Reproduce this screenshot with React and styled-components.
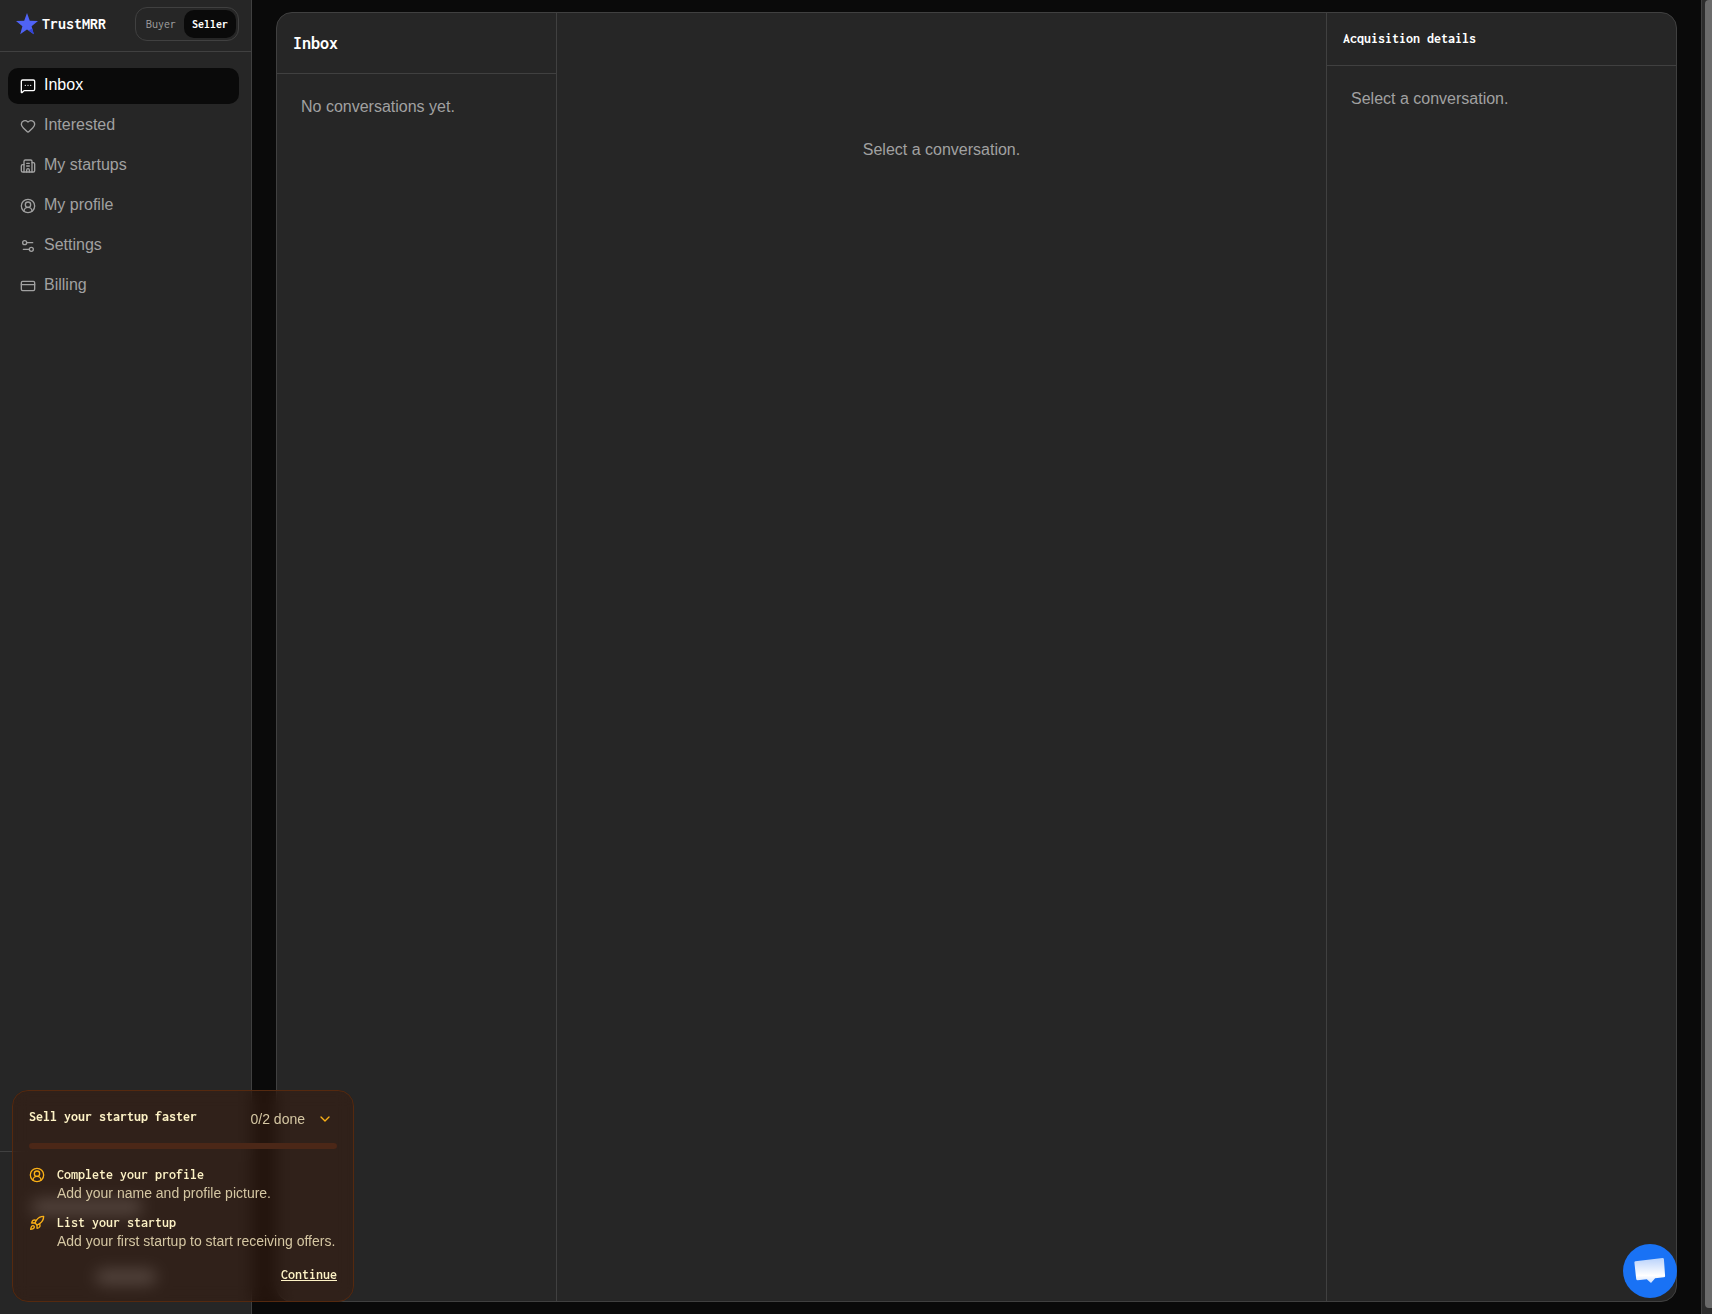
import React, { useState } from "react";
import styled, { createGlobalStyle } from "styled-components";
import {
  MessageSquareMore,
  Heart,
  Building2,
  CircleUserRound,
  Settings2,
  CreditCard,
  ChevronDown,
  Rocket,
} from "lucide-react";

const links = [
  { label: "Inbox", icon: MessageSquareMore, active: true },
  { label: "Interested", icon: Heart },
  { label: "My startups", icon: Building2 },
  { label: "My profile", icon: CircleUserRound },
  { label: "Settings", icon: Settings2 },
  { label: "Billing", icon: CreditCard },
];

const steps = [
  {
    title: "Complete your profile",
    text: "Add your name and profile picture.",
    icon: CircleUserRound,
  },
  {
    title: "List your startup",
    text: "Add your first startup to start receiving offers.",
    icon: Rocket,
  },
];

const Sidebar = () => {
  const [role, setRole] = useState("Seller");
  return (
    <Aside>
      <Aside__top>
        <Logo href="#">
          <svg width="22" height="22" viewBox="0 0 22 22" aria-hidden="true">
            <path
              fill="#4f63f5"
              d="M11 0l2.800 7.800 8.200.2-6.400 5.200 2.200 8L11 16.600l-6.800 4.600 2.200-8L0 8l8.200-.2z"
            />
            <path fill="#3344d8" d="M12.500 17.600l3.800-2.200 1.500 5.800z" />
          </svg>
          TrustMRR
        </Logo>
        <Toggle>
          {["Buyer", "Seller"].map((name) => (
            <Toggle__button
              key={name}
              type="button"
              $on={role === name}
              onClick={() => setRole(name)}
            >
              {name}
            </Toggle__button>
          ))}
        </Toggle>
      </Aside__top>
      <Nav>
        {links.map(({ label, icon: Icon, active }) => (
          <Nav__link key={label} href="#" $active={active}>
            <Icon size={16} />
            <Nav__label>{label}</Nav__label>
          </Nav__link>
        ))}
      </Nav>
      <Aside__footer aria-hidden="true">
        <Skeleton $width="110px" />
        <Skeleton $width="60px" $center />
      </Aside__footer>
    </Aside>
  );
};

const Checklist = () => (
  <Card>
    <Card__head>
      <Card__title>Sell your startup faster</Card__title>
      <Card__toggle type="button">
        0/2 done
        <ChevronDown size={16} />
      </Card__toggle>
    </Card__head>
    <Card__bar
      role="progressbar"
      aria-label="Steps done"
      aria-valuenow={0}
      aria-valuemax={2}
    />
    <Steps>
      {steps.map(({ title, text, icon: Icon }) => (
        <Step key={title}>
          <Icon size={16} />
          <div>
            <Step__title>{title}</Step__title>
            <Step__text>{text}</Step__text>
          </div>
        </Step>
      ))}
    </Steps>
    <Card__link href="#">Continue</Card__link>
  </Card>
);

const App = () => {
  return (
    <Page>
      <GlobalStyle />
      <Sidebar />
      <Main>
        <Panel>
          <Column>
            <Column__head $large>
              <h1>Inbox</h1>
            </Column__head>
            <Empty>No conversations yet.</Empty>
          </Column>
          <Column>
            <Empty $center>Select a conversation.</Empty>
          </Column>
          <Column>
            <Column__head>
              <h2>Acquisition details</h2>
            </Column__head>
            <Empty>Select a conversation.</Empty>
          </Column>
        </Panel>
      </Main>
      <Scrollbar>
        <Scrollbar__thumb />
      </Scrollbar>
      <Checklist />
      <Chat type="button" aria-label="Open chat">
        <svg width="32" height="28" viewBox="0 0 32 28" aria-hidden="true">
          <defs>
            <linearGradient id="bubble" x1="0" y1="0" x2="0" y2="1">
              <stop offset="0" stopColor="#b9d2fb" />
              <stop offset="0.7" stopColor="#ffffff" />
              <stop offset="1" stopColor="#cfe0fd" />
            </linearGradient>
          </defs>
          <path
            fill="url(#bubble)"
            d="M1.300 4.200L28.600 1q1.200 0 1.300 1l1.200 17q0 1.200-1.200 1.300l-8.800 1L17 26l-4.200-3.800-9.200 1q-1.200 0-1.400-1.200L.4 5.600q-.2-1.200.9-1.400z"
          />
        </svg>
      </Chat>
    </Page>
  );
};
export default App;

const mono = `"Inconsolata", "Noto Sans Mono CJK SC", "Liberation Mono", monospace`;

const GlobalStyle = createGlobalStyle`
  * {
    box-sizing: border-box;
  }
  body {
    margin: 0;
    background-color: #0a0a0a;
    color: #fff;
    font-family: "Liberation Sans", Arial, sans-serif;
    font-size: 16px;
    line-height: 24px;
  }
  h1, h2, p, ul {
    margin: 0;
    padding: 0;
  }
  a {
    color: inherit;
    text-decoration: none;
  }
  button {
    border: none;
    background: none;
    padding: 0;
    color: inherit;
    font: inherit;
    cursor: pointer;
  }
`;

const Page = styled.div`
  display: flex;
  min-height: 100vh;
`;
const Aside = styled.aside`
  display: flex;
  flex-direction: column;
  flex: none;
  width: 252px;
  background-color: #262626;
  border-right: 1px solid #404040;
`;
const Aside__top = styled.div`
  display: flex;
  align-items: center;
  justify-content: space-between;
  height: 52px;
  padding: 0 12px 4px 16px;
  border-bottom: 1px solid #404040;
`;
const Logo = styled.a`
  display: flex;
  align-items: center;
  gap: 4px;
  font-family: ${mono};
  font-size: 16px;
  font-weight: 700;
`;
const Toggle = styled.div`
  display: flex;
  padding: 2px;
  border: 1px solid #404040;
  border-radius: 12px;
`;
const Toggle__button = styled.button`
  height: 28px;
  padding: 0 8px;
  border-radius: 10px;
  font-family: ${mono};
  font-size: 12px;
  font-weight: ${(props) => (props.$on ? 700 : 400)};
  color: ${(props) => (props.$on ? "#fff" : "#a1a1a1")};
  background-color: ${(props) => (props.$on ? "#0a0a0a" : "transparent")};
`;
const Nav = styled.nav`
  display: flex;
  flex-direction: column;
  flex: auto;
  gap: 4px;
  padding: 16px 12px 16px 8px;
`;
const Nav__link = styled.a`
  display: flex;
  align-items: center;
  gap: 8px;
  height: 36px;
  padding: 0 12px;
  border-radius: 10px;
  color: ${(props) => (props.$active ? "#fff" : "#a1a1a1")};
  background-color: ${(props) => (props.$active ? "#0a0a0a" : "transparent")};
`;
const Nav__label = styled.span`
  padding-bottom: 2px;
`;
const Aside__footer = styled.div`
  display: flex;
  flex-direction: column;
  gap: 56px;
  height: 163px;
  padding: 48px 32px 0;
  border-top: 1px solid #404040;
`;
const Skeleton = styled.div`
  width: ${(props) => props.$width};
  height: 14px;
  border-radius: 6px;
  align-self: ${(props) => (props.$center ? "center" : "flex-start")};
  background-color: #777;
`;
const Main = styled.main`
  display: flex;
  flex: auto;
  min-width: 0;
  padding: 12px 24px;
`;
const Panel = styled.div`
  display: grid;
  grid-template-columns: 279px 1fr 350px;
  flex: auto;
  background-color: #262626;
  border: 1px solid #404040;
  border-radius: 16px;
  overflow: hidden;
`;
const Column = styled.section`
  & + & {
    border-left: 1px solid #404040;
  }
`;
const Column__head = styled.header`
  padding: 16px;
  border-bottom: 1px solid #404040;
  h1,
  h2 {
    font-family: ${mono};
    font-size: ${(props) => (props.$large ? "18px" : "14px")};
    line-height: ${(props) => (props.$large ? "28px" : "20px")};
    font-weight: 700;
  }
`;
const Empty = styled.p`
  padding: ${(props) => (props.$center ? "124px 24px" : "20px 24px")};
  line-height: 26px;
  text-align: ${(props) => (props.$center ? "center" : "left")};
  color: #a1a1a1;
`;
const Scrollbar = styled.div`
  flex: none;
  width: 11px;
  padding: 0 0 6px 3px;
  background-color: #2c2c2c;
  border-left: 1px solid #404040;
`;
const Scrollbar__thumb = styled.div`
  height: 100%;
  border-radius: 4px 0 0 4px;
  background-color: #6b6b6b;
`;
const Card = styled.section`
  position: fixed;
  left: 12px;
  bottom: 12px;
  width: 342px;
  padding: 16px;
  border: 1px solid #55290f;
  border-radius: 16px;
  background-color: rgba(58, 28, 14, 0.5);
  backdrop-filter: blur(8px);
  color: #fef3c6;
  font-size: 14px;
  line-height: 20px;
`;
const Card__head = styled.div`
  display: flex;
  justify-content: space-between;
`;
const Card__title = styled.h2`
  font-family: ${mono};
  font-size: 14px;
  line-height: 20px;
  font-weight: 700;
`;
const Card__toggle = styled.button`
  display: flex;
  align-items: center;
  gap: 12px;
  height: 24px;
  padding-right: 4px;
  color: #d5c7a3;
  svg {
    color: #fbb117;
  }
`;
const Card__bar = styled.div`
  height: 6px;
  margin: 12px 0 18px;
  border-radius: 3px;
  background-color: #4b2717;
`;
const Steps = styled.ul`
  display: flex;
  flex-direction: column;
  gap: 12px;
`;
const Step = styled.li`
  display: flex;
  gap: 12px;
  white-space: nowrap;
  svg {
    flex: none;
    color: #fbb117;
  }
`;
const Step__title = styled.p`
  font-family: ${mono};
  font-weight: 600;
  line-height: 16px;
`;
const Step__text = styled.p`
  color: #d5c7a3;
`;
const Card__link = styled.a`
  display: block;
  width: fit-content;
  margin: 14px 0 0 auto;
  font-family: ${mono};
  font-weight: 600;
  text-decoration: underline;
`;
const Chat = styled.button`
  position: fixed;
  right: 35px;
  bottom: 16px;
  display: flex;
  align-items: center;
  justify-content: center;
  width: 54px;
  height: 54px;
  border-radius: 50%;
  background-color: #1972f5;
`;
